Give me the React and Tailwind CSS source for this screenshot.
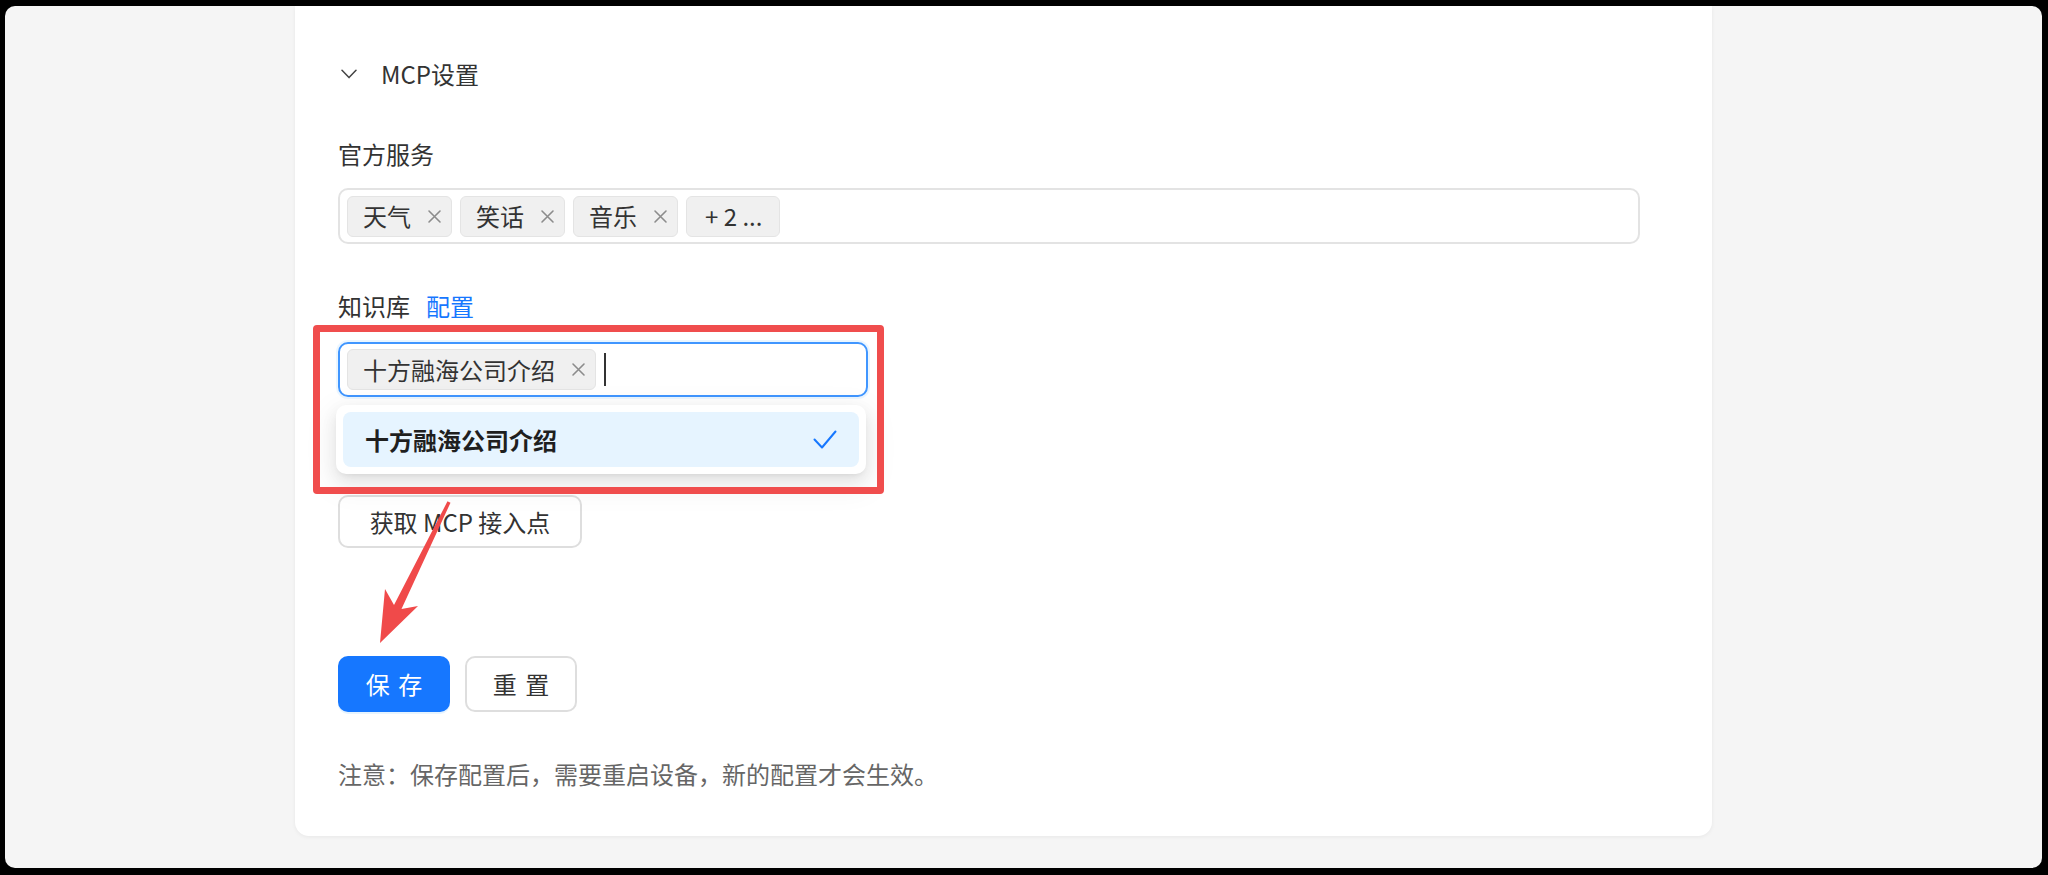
import React from "react";

function XIcon() {
  return (
    <svg width="15" height="15" viewBox="0 0 15 15" className="shrink-0">
      <path d="M2 2 L13 13 M13 2 L2 13" stroke="#8c8c8c" strokeWidth="1.6" strokeLinecap="round" />
    </svg>
  );
}

function Tag({ label, close = true, extra = "" }) {
  return (
    <div
      className={`h-[41px] flex items-center bg-[#f0f0f0] border-[1.5px] border-[#e4e4e4] rounded-[6px] text-[24px] leading-[32px] text-[#333] ${extra}`}
    >
      <span>{label}</span>
      {close && (
        <span className="ml-[16px] flex items-center">
          <XIcon />
        </span>
      )}
    </div>
  );
}

export default function App() {
  return (
    <div className="w-[2048px] h-[875px] bg-black pt-[6px] pl-[5px] pr-[6px] pb-[7px] flex font-['Noto_Sans_CJK_SC','Noto_Sans',sans-serif]">
      <div className="flex-1 bg-[#f5f5f5] rounded-[10px] overflow-hidden pl-[290px]">
        <div className="relative w-[1417px] h-[830px] bg-white rounded-b-[14px] shadow-[0_1px_4px_rgba(0,0,0,0.06)] pl-[43px] pt-[52px] text-[24px] leading-[32px] text-[#333]">
          {/* header */}
          <div className="flex items-center h-[32px]">
            <svg width="16" height="10" viewBox="0 0 16 10" className="ml-[3px]">
              <path d="M1 1.2 L8 8.6 L15 1.2" fill="none" stroke="#444" strokeWidth="1.5" strokeLinecap="round" strokeLinejoin="round" />
            </svg>
            <span className="ml-[24px]">MCP设置</span>
          </div>

          {/* 官方服务 */}
          <div className="mt-[48px] h-[32px]">官方服务</div>
          <div className="mt-[18px] w-[1302px] h-[56px] border-[2px] border-[#e3e3e3] rounded-[10px] flex items-center gap-[8px] pl-[7px]">
            <Tag label="天气" extra="pl-[15px] pr-[9px]" />
            <Tag label="笑话" extra="pl-[15px] pr-[9px]" />
            <Tag label="音乐" extra="pl-[15px] pr-[9px]" />
            <Tag label="+ 2 ..." close={false} extra="pl-[18px] pr-[17px]" />
          </div>

          {/* 知识库 */}
          <div className="mt-[46px] h-[32px] flex">
            <span>知识库</span>
            <span className="ml-[16px] text-[#1677ff]">配置</span>
          </div>
          <div className="relative mt-[20px] w-[530px]">
            <div className="w-[530px] h-[55px] border-[2px] border-[#4096ff] rounded-[10px] shadow-[0_0_0_2px_rgba(5,145,255,0.08)] flex items-center pl-[7px]">
              <Tag label="十方融海公司介绍" extra="pl-[15px] pr-[9px]" />
              <div className="ml-[8px] w-[2px] h-[33px] bg-[#333]" />
            </div>
            {/* dropdown */}
            <div className="absolute left-[-2px] top-[63px] w-[530px] bg-white rounded-[10px] shadow-[0_6px_16px_rgba(0,0,0,0.08),0_3px_6px_-4px_rgba(0,0,0,0.12),0_9px_28px_8px_rgba(0,0,0,0.05)] p-[7px]">
              <div className="h-[55px] rounded-[8px] bg-[#e6f4ff] flex items-center justify-between pl-[22px] pr-[22px]">
                <span className="font-semibold text-[#1f1f1f]">十方融海公司介绍</span>
                <svg width="24" height="20" viewBox="0 0 24 20">
                  <path d="M1.5 9.5 L9 17.5 L22.5 1.5" fill="none" stroke="#1677ff" strokeWidth="2" strokeLinecap="round" strokeLinejoin="round" />
                </svg>
              </div>
            </div>
            {/* red highlight */}
            <div className="absolute left-[-25px] top-[-17px] w-[571px] h-[169px] border-[7px] border-[#f04d4d] rounded-[4px] pointer-events-none" />
          </div>

          {/* 获取 MCP 接入点 */}
          <button className="mt-[98px] w-[244px] h-[53px] border-[2px] border-[#dedede] rounded-[10px] bg-white flex items-center justify-center text-[#333]">
            获取 MCP 接入点
          </button>

          {/* buttons */}
          <div className="mt-[108px] flex gap-[15px]">
            <button className="w-[112px] h-[56px] bg-[#1677ff] rounded-[10px] text-white shadow-[0_2px_0_rgba(5,145,255,0.1)] flex items-center justify-center">
              <span className="tracking-[0.36em] mr-[-0.36em]">保存</span>
            </button>
            <button className="w-[112px] h-[56px] bg-white border-[2px] border-[#dedede] rounded-[10px] text-[#333] flex items-center justify-center">
              <span className="tracking-[0.36em] mr-[-0.36em]">重置</span>
            </button>
          </div>

          <div className="mt-[46px] h-[32px] text-[#666]">注意：保存配置后，需要重启设备，新的配置才会生效。</div>

          {/* red arrow */}
          <svg className="absolute left-[75px] top-[484px]" width="90" height="160" viewBox="0 0 90 160">
            <polygon
              points="10,153 48,116 31.5,119 80.5,12.7 77.5,11.3 24,115 15,99"
              fill="#f04a4a"
            />
          </svg>
        </div>
      </div>
    </div>
  );
}
